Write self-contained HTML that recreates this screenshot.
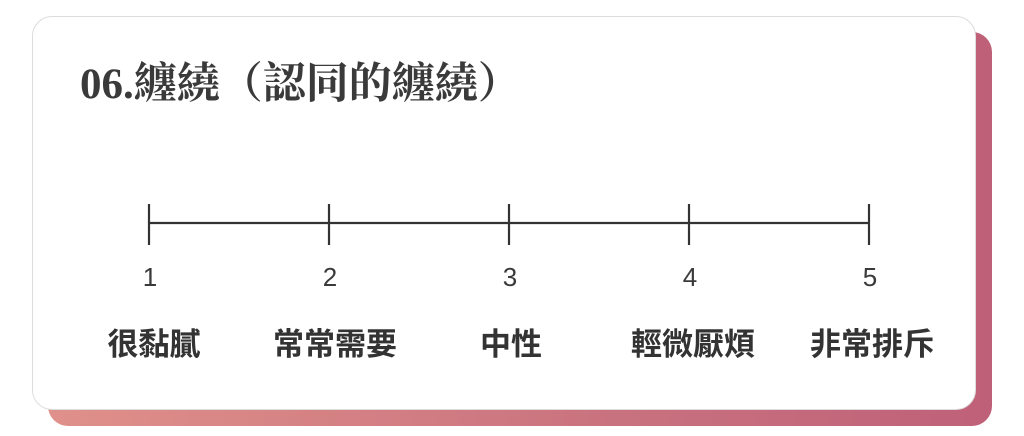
<!DOCTYPE html>
<html><head><meta charset="utf-8"><style>
html,body{margin:0;padding:0;width:1024px;height:436px;background:#fff;overflow:hidden}
.sh{position:absolute;left:48px;top:32px;width:944px;height:394px;border-radius:20px;background:linear-gradient(90deg,#e0908a,#c9727f 60%,#bf6079)}
.card{position:absolute;left:32px;top:16px;width:942px;height:392px;border-radius:20px;background:#fff;border:1px solid #ddd}
.t{position:absolute;left:80px;top:50px;font:bold 43px "Liberation Serif","Noto Serif CJK TC","Noto Serif CJK SC",serif;color:#3a3a3a;white-space:nowrap;letter-spacing:0px}
.n{position:absolute;top:262px;width:60px;margin-left:-30px;text-align:center;font:26px "Liberation Sans",sans-serif;color:#3a3a3a}
.l{position:absolute;top:319px;width:180px;margin-left:-90px;text-align:center;font:bold 31px "Liberation Sans","Noto Sans CJK TC",sans-serif;color:#333}
</style></head><body>
<div class="sh"></div><div class="card"></div>
<div class="t">06.纏繞（認同的纏繞）</div>
<svg style="position:absolute;left:0;top:0" width="1024" height="436">
<g stroke="#333" stroke-width="2.2"><line x1="149" y1="223" x2="869" y2="223"/>
<line x1="149" y1="204" x2="149" y2="245"/><line x1="329" y1="204" x2="329" y2="245"/><line x1="509" y1="204" x2="509" y2="245"/><line x1="689" y1="204" x2="689" y2="245"/><line x1="869" y1="204" x2="869" y2="245"/></g></svg>
<div class="n" style="left:150px">1</div><div class="n" style="left:330px">2</div><div class="n" style="left:510px">3</div><div class="n" style="left:690px">4</div><div class="n" style="left:870px">5</div>
<div class="l" style="left:154px">很黏膩</div><div class="l" style="left:335px">常常需要</div><div class="l" style="left:511px">中性</div><div class="l" style="left:693px">輕微厭煩</div><div class="l" style="left:872px">非常排斥</div>
</body></html>
